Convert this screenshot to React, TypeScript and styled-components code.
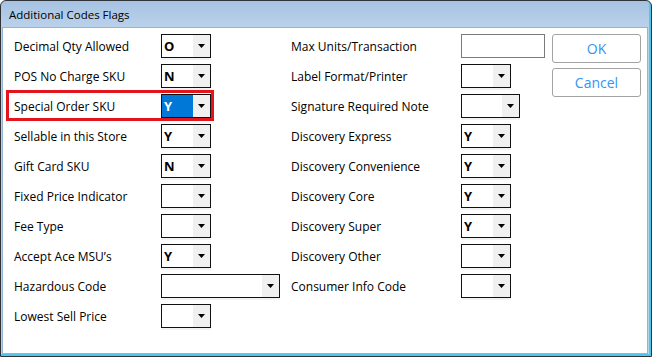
import styled, { createGlobalStyle } from "styled-components";

const GlobalStyle = createGlobalStyle`
  html, body {
    margin: 0;
    padding: 0;
    background: #ffffff;
  }
  body {
    font-family: "Open Sans", "Noto Sans", sans-serif;
    color: #000000;
  }
`;

const Window = styled.div`
  width: 652px;
  height: 357px;
  box-sizing: border-box;
  display: flex;
  flex-direction: column;
  border: 1px solid #2f3338;
  border-radius: 6px 6px 0 0;
  padding: 0 3px 2px 1px;
  background: linear-gradient(#a6c3e3, #bad1ea 26px, #bad1ea);
  box-shadow: inset -2px -2px 0 #4ec6ee;
`;

const TitleBar = styled.div`
  height: 26px;
  display: flex;
  align-items: center;
  padding-left: 7px;
  font-size: 11.5px;
  color: #000000;
`;

const Body = styled.div`
  flex: 1;
  display: flex;
  align-items: flex-start;
  background: #ffffff;
  border: 1px solid #95b4d4;
  padding: 3px 0 0 11px;
`;

const Column = styled.div<{ $width: number }>`
  width: ${(p) => p.$width}px;
  display: flex;
  flex-direction: column;
`;

const Row = styled.div<{ $highlight?: boolean }>`
  position: relative;
  width: fit-content;
  height: 30px;
  display: flex;
  align-items: center;

  ${(p) =>
    p.$highlight &&
    `
    &::after {
      content: "";
      position: absolute;
      left: -8px;
      right: -3px;
      top: -1px;
      bottom: 0;
      border: 3px solid #e3141c;
    }
  `}
`;

const Label = styled.span<{ $width: number }>`
  width: ${(p) => p.$width}px;
  font-size: 12px;
  white-space: nowrap;
  line-height: 16px;
  padding-top: 2px;
`;

const Combo = styled.div<{ $width: number }>`
  width: ${(p) => p.$width}px;
  height: 24px;
  box-sizing: border-box;
  display: flex;
  border: 1px solid #111111;
  background: #ffffff;
  box-shadow: 0 2px 0 #f2f2f2;
`;

const ComboValue = styled.div<{ $selected?: boolean }>`
  flex: 1;
  display: flex;
  align-items: center;
  padding-left: 2px;
  font-size: 13px;
  font-weight: 700;
  background: ${(p) => (p.$selected ? "#0078d7" : "#ffffff")};
  color: ${(p) => (p.$selected ? "#ffffff" : "#000000")};
`;

const ComboArrow = styled.div`
  width: 17px;
  display: flex;
  align-items: center;
  justify-content: center;
  background: #f0f0f0;
  padding-bottom: 1px;
`;

const TextBox = styled.div<{ $width: number }>`
  width: ${(p) => p.$width}px;
  height: 24px;
  box-sizing: border-box;
  border: 1px solid #7a7a7a;
  background: #ffffff;
`;

const ButtonStack = styled.div`
  display: flex;
  flex-direction: column;
  gap: 5px;
  margin-left: 8px;
  margin-top: 3px;
`;

const Button = styled.button`
  width: 89px;
  height: 29px;
  box-sizing: border-box;
  border: 1px solid #a3a3a3;
  border-radius: 3px;
  background: #ffffff;
  color: #3394f5;
  font-family: "Open Sans", "Noto Sans", sans-serif;
  font-size: 14px;
  padding: 0;
`;

type Field = {
  label: string;
  value?: string;
  width?: number;
  selected?: boolean;
  highlight?: boolean;
  text?: boolean;
};

const leftFields: Field[] = [
  { label: "Decimal Qty Allowed", value: "O" },
  { label: "POS No Charge SKU", value: "N" },
  { label: "Special Order SKU", value: "Y", selected: true, highlight: true },
  { label: "Sellable in this Store", value: "Y" },
  { label: "Gift Card SKU", value: "N" },
  { label: "Fixed Price Indicator", value: "" },
  { label: "Fee Type", value: "" },
  { label: "Accept Ace MSU\u2019s", value: "Y" },
  { label: "Hazardous Code", value: "", width: 119 },
  { label: "Lowest Sell Price", value: "" },
];

const rightFields: Field[] = [
  { label: "Max Units/Transaction", text: true, width: 84 },
  { label: "Label Format/Printer", value: "" },
  { label: "Signature Required Note", value: "", width: 59 },
  { label: "Discovery Express", value: "Y" },
  { label: "Discovery Convenience", value: "Y" },
  { label: "Discovery Core", value: "Y" },
  { label: "Discovery Super", value: "Y" },
  { label: "Discovery Other", value: "" },
  { label: "Consumer Info Code", value: "" },
];

const DownArrow = () => (
  <svg width="7" height="4" viewBox="0 0 7 4">
    <polygon points="0,0 7,0 3.5,4" fill="#000000" />
  </svg>
);

const FieldRow = ({ field, labelWidth }: { field: Field; labelWidth: number }) => (
  <Row $highlight={field.highlight}>
    <Label $width={labelWidth}>{field.label}</Label>
    {field.text ? (
      <TextBox $width={field.width ?? 84} />
    ) : (
      <Combo $width={field.width ?? 50}>
        <ComboValue $selected={field.selected}>{field.value}</ComboValue>
        <ComboArrow>
          <DownArrow />
        </ComboArrow>
      </Combo>
    )}
  </Row>
);

const App = () => {
  return (
    <>
      <GlobalStyle />
      <Window>
        <TitleBar>Additional Codes Flags</TitleBar>
        <Body>
          <Column $width={277}>
            {leftFields.map((f) => (
              <FieldRow key={f.label} field={f} labelWidth={147} />
            ))}
          </Column>
          <Column $width={253}>
            {rightFields.map((f) => (
              <FieldRow key={f.label} field={f} labelWidth={170} />
            ))}
          </Column>
          <ButtonStack>
            <Button>OK</Button>
            <Button>Cancel</Button>
          </ButtonStack>
        </Body>
      </Window>
    </>
  );
};

export default App;
